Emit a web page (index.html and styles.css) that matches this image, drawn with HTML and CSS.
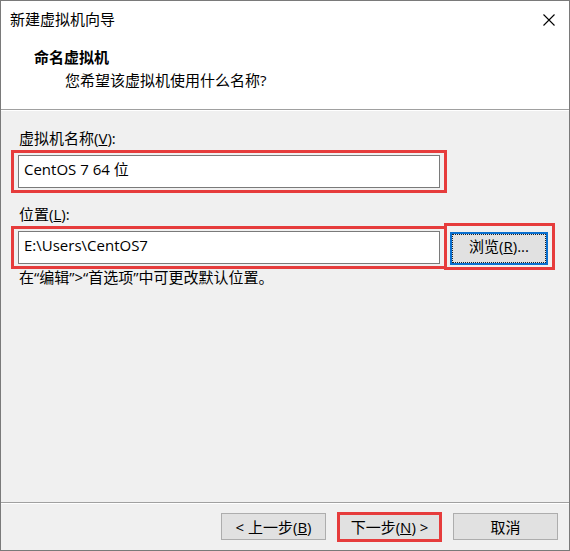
FILE: index.html
```html
<!DOCTYPE html>
<html lang="zh-CN">
<head>
<meta charset="utf-8">
<title>新建虚拟机向导</title>
<link rel="stylesheet" href="styles.css">
</head>
<body>
<div class="window">
  <div class="titlebar">
    <span class="title">新建虚拟机向导</span>
    <span class="close">
      <svg width="12" height="12" viewBox="0 0 12 12"><path d="M0.5 0.5 L11.5 11.5 M11.5 0.5 L0.5 11.5" stroke="#000" stroke-width="1.1" fill="none"/></svg>
    </span>
  </div>
  <div class="header">
    <div class="h-title">命名虚拟机</div>
    <div class="h-sub">您希望该虚拟机使用什么名称?</div>
  </div>
  <div class="content">
    <div class="label">虚拟机名称(<u>V</u>):</div>
    <div class="mark mark-field"><div class="input">CentOS 7 64 位</div></div>
    <div class="label label-loc">位置(<u>L</u>):</div>
    <div class="row">
      <div class="mark mark-field"><div class="input">E:\Users\CentOS7</div></div>
      <div class="mark mark-browse">
        <div class="browse"><div class="focus">浏览(<u>R</u>)...</div></div>
      </div>
    </div>
    <div class="hint">在“编辑”&gt;“首选项”中可更改默认位置。</div>
  </div>
  <div class="footer">
    <div class="btn">&lt; 上一步(<u>B</u>)</div>
    <div class="btn btn-hl">下一步(<u>N</u>) &gt;</div>
    <div class="btn">取消</div>
  </div>
</div>
</body>
</html>
```
FILE: styles.css
```css
* { box-sizing: border-box; }
html, body { margin: 0; padding: 0; background: #f0f0f0; }
body {
  font-family: "Open Sans", "Noto Sans CJK SC", sans-serif;
  font-size: 15px;
  color: #000;
}
.window {
  width: 570px;
  height: 551px;
  border: 1px solid #7a7a7a;
  display: flex;
  flex-direction: column;
  background: #f0f0f0;
}
.titlebar {
  height: 37px;
  background: #fff;
  display: flex;
  align-items: center;
  justify-content: space-between;
  padding: 0 14px 1px 9px;
  line-height: 20px;
}
.close { display: flex; margin-top: 1px; }
.header {
  background: #fff;
  padding: 9px 0 20px;
  border-bottom: 1px solid #a0a0a0;
  line-height: 20px;
}
.h-title { padding-left: 33px; font-weight: bold; }
.h-sub { margin-top: 3px; margin-bottom: -1px; padding-left: 64px; }
.content {
  flex: 1;
  border-top: 1px solid #fff;
  padding: 17px 0 0 17px;
  line-height: 20px;
}
.label { padding-left: 1px; height: 20px; margin-bottom: 2px; }
.label-loc { margin-top: 11px; }
.mark { border: 3px solid #e63c3c; }
.mark-field {
  width: 436px;
  margin-left: -7px;
  padding: 2px 4px;
}
.input {
  height: 33px;
  border: 1px solid #7a7a7a;
  background: #fff;
  padding: 0 0 6px 5px;
  display: flex;
  align-items: center;
  white-space: nowrap;
}
.row { display: flex; align-items: flex-start; }
.mark-browse {
  width: 111px;
  margin-left: -3px;
  margin-top: -3px;
  padding: 6px 4px 2px 3px;
}
.browse {
  height: 33px;
  border: 2px solid #0a70d0;
  background: #e1e1e1;
}
.focus {
  height: 100%;
  border: 1px dotted #222;
  padding-bottom: 5px;
  display: flex;
  align-items: center;
  justify-content: center;
}
.hint { padding-left: 1px; margin-top: -3px; }
.footer {
  height: 48px;
  border-top: 1px solid #a0a0a0;
  box-shadow: inset 0 1px 0 #fff;
  display: flex;
  justify-content: flex-end;
  align-items: center;
  gap: 11px;
  padding-right: 11px;
}
.btn {
  width: 105px;
  height: 27px;
  border: 1px solid #adadad;
  background: #e1e1e1;
  display: flex;
  align-items: center;
  justify-content: center;
  line-height: 20px;
  white-space: nowrap;
}
.btn-hl {
  height: 30px;
  border: 3px solid #e63c3c;
}
```
